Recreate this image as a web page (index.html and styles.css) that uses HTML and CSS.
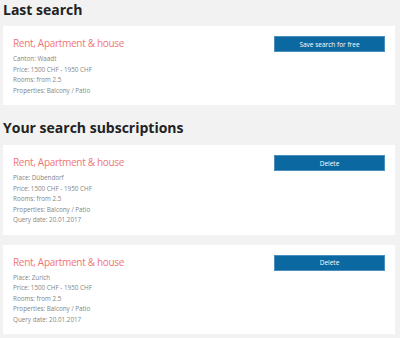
FILE: index.html
```html
<!DOCTYPE html>
<html lang="en">
<head>
    <meta charset="UTF-8">
    <meta name="viewport" content="width=device-width, initial-scale=1.0">
    <title>Search subscriptions</title>
    <link rel="stylesheet" href="styles.css">
</head>
<body>
    <div class="page">
        <h2 class="section-title">Last search</h2>
        <div class="card">
            <div class="info">
                <h3 class="search-title">Rent, Apartment &amp; house</h3>
                <p>Canton: Waadt</p>
                <p>Price: 1500 CHF - 1950 CHF</p>
                <p>Rooms: from 2.5</p>
                <p>Properties: Balcony / Patio</p>
            </div>
            <button class="btn">Save search for free</button>
        </div>

        <h2 class="section-title second">Your search subscriptions</h2>
        <div class="card">
            <div class="info">
                <h3 class="search-title">Rent, Apartment &amp; house</h3>
                <p>Place: Dübendorf</p>
                <p>Price: 1500 CHF - 1950 CHF</p>
                <p>Rooms: from 2.5</p>
                <p>Properties: Balcony / Patio</p>
                <p>Query date: 20.01.2017</p>
            </div>
            <button class="btn">Delete</button>
        </div>
        <div class="card">
            <div class="info">
                <h3 class="search-title">Rent, Apartment &amp; house</h3>
                <p>Place: Zurich</p>
                <p>Price: 1500 CHF - 1950 CHF</p>
                <p>Rooms: from 2.5</p>
                <p>Properties: Balcony / Patio</p>
                <p>Query date: 20.01.2017</p>
            </div>
            <button class="btn">Delete</button>
        </div>
    </div>
</body>
</html>
```

FILE: styles.css
```css
body {
    font-family: "Open Sans", Arial, sans-serif;
    margin: 0;
    padding: 0;
    background: #f2f2f2;
    color: #222;
}

.page {
    padding: 0 5px 0 3px;
}

.section-title {
    font-size: 14px;
    font-weight: bold;
    margin: 0;
    line-height: 20px;
    padding: 0 0 6px;
    color: #222;
}

.section-title.second {
    padding: 3px 0 7px;
}

.card {
    background: #fff;
    display: flex;
    justify-content: space-between;
    align-items: flex-start;
    padding: 10px 10px 9px;
    margin-bottom: 10px;
}

.search-title {
    font-size: 10px;
    font-weight: normal;
    letter-spacing: -0.3px;
    color: #ef7676;
    margin: 0 0 4px;
    line-height: 14px;
}

.info p {
    margin: 0;
    font-size: 6.3px;
    line-height: 10.5px;
    color: #858585;
}

.btn {
    width: 111px;
    height: 16px;
    background: #0b68a0;
    border: 1px solid #4a8fbd;
    color: #fff;
    font-family: "Open Sans", Arial, sans-serif;
    font-size: 6.5px;
    padding: 0;
    cursor: pointer;
}
```
